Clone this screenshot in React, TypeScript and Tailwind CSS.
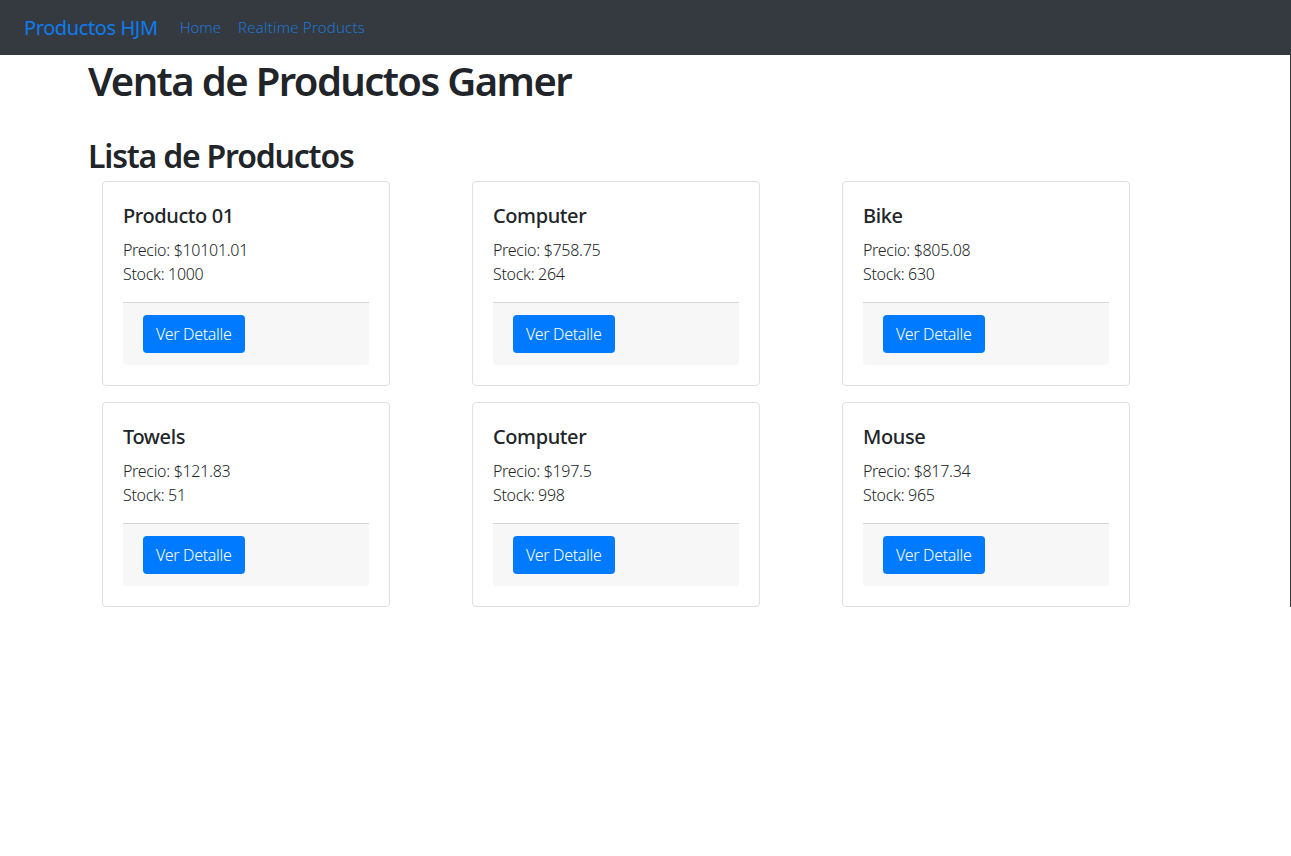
const products = [
  { title: 'Producto 01', price: '10101.01', stock: 1000 },
  { title: 'Computer', price: '758.75', stock: 264 },
  { title: 'Bike', price: '805.08', stock: 630 },
  { title: 'Towels', price: '121.83', stock: 51 },
  { title: 'Computer', price: '197.5', stock: 998 },
  { title: 'Mouse', price: '817.34', stock: 965 },
];

const ProductCard = ({ title, price, stock }: { title: string; price: string; stock: number }) => (
  <div className="rounded border border-[#dfdfdf] bg-white p-5">
    <h5 className="mt-[2px] mb-[10px] text-[20px] leading-6 font-medium tracking-[-0.4px] text-[#212529]">
      {title}
    </h5>
    <p className="text-[16px] leading-6 font-light tracking-[-0.3px] text-[#212529]">Precio: ${price}</p>
    <p className="mb-4 text-[16px] leading-6 font-light tracking-[-0.3px] text-[#212529]">Stock: {stock}</p>
    <div className="rounded-b border-t border-[#d6d6d6] bg-[#f7f7f7] px-5 py-3">
      <button
        type="button"
        className="h-[38px] rounded bg-[#007bff] px-[13px] text-[16px] font-light tracking-[-0.3px] text-white"
      >
        Ver Detalle
      </button>
    </div>
  </div>
);

export default function App() {
  return (
    <div className="min-h-[856px] bg-white font-['Noto_Sans','Open_Sans',sans-serif]">
      <nav className="flex h-[55px] items-center bg-[#343a40] px-6">
        <a href="#" className="mr-[22px] text-[20px] tracking-[-0.4px] text-[#0d7cf2]">
          Productos HJM
        </a>
        <a href="#" className="mr-[17px] text-[15px] font-light text-[#1e76d2]">
          Home
        </a>
        <a href="#" className="text-[15px] font-light tracking-[0.2px] text-[#1e76d2]">
          Realtime Products
        </a>
      </nav>
      <main className="border-r border-[#3a3a3a] pt-[2px] pl-[88px]">
        <h1 className="text-[40px] leading-[48px] font-semibold tracking-[-1.6px] text-[#212529]">
          Venta de Productos Gamer
        </h1>
        <h2 className="mt-[32px] text-[32px] leading-[38px] font-semibold tracking-[-1.2px] text-[#212529]">
          Lista de Productos
        </h2>
        <div className="mt-[6px] grid w-fit grid-cols-[288px_288px_288px] gap-x-[82px] gap-y-[16px] pl-[14px]">
          {products.map((p, i) => (
            <ProductCard key={i} {...p} />
          ))}
        </div>
      </main>
    </div>
  );
}
